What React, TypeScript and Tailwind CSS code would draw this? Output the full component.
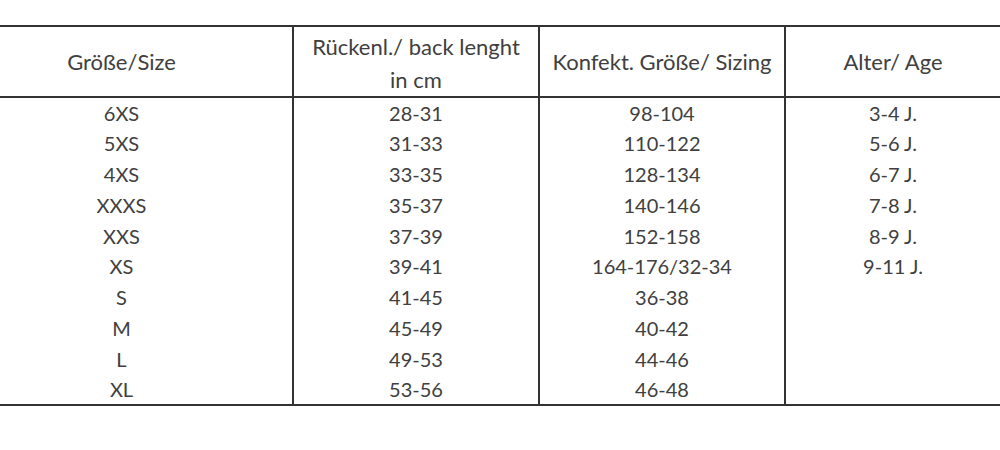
const rows: [string, string, string, string][] = [
  ['6XS', '28-31', '98-104', '3-4 J.'],
  ['5XS', '31-33', '110-122', '5-6 J.'],
  ['4XS', '33-35', '128-134', '6-7 J.'],
  ['XXXS', '35-37', '140-146', '7-8 J.'],
  ['XXS', '37-39', '152-158', '8-9 J.'],
  ['XS', '39-41', '164-176/32-34', '9-11 J.'],
  ['S', '41-45', '36-38', ''],
  ['M', '45-49', '40-42', ''],
  ['L', '49-53', '44-46', ''],
  ['XL', '53-56', '46-48', ''],
];

export default function App() {
  return (
    <div className="w-[1000px] h-[450px] bg-white pt-[25px] overflow-hidden text-[#404040] font-['Lato','Liberation_Sans',sans-serif]">
      <table className="table-fixed border-collapse w-[1000px]">
        <colgroup>
          <col className="w-[293px]" />
          <col className="w-[246px]" />
          <col className="w-[246px]" />
          <col className="w-[215px]" />
        </colgroup>
        <thead>
          <tr className="h-[70px] border-t-2 border-b-2 border-[#333] text-[22px] leading-[33px]">
            <th className="font-normal text-center pr-[49px]">Größe/Size</th>
            <th className="font-normal text-center border-l-2 border-[#333] pt-[3px]">
              Rückenl./ back lenght
              <br />
              in cm
            </th>
            <th className="font-normal text-center border-l-2 border-[#333]">Konfekt. Größe/ Sizing</th>
            <th className="font-normal text-center border-l-2 border-[#333]">Alter/ Age</th>
          </tr>
        </thead>
        <tbody className="border-b-2 border-[#333] text-[20px]">
          {rows.map(([size, back, sizing, age]) => (
            <tr key={size} className="h-[30.8px]">
              <td className="text-center pr-[49px] leading-none">{size}</td>
              <td className="text-center border-l-2 border-[#333] leading-none">{back}</td>
              <td className="text-center border-l-2 border-[#333] leading-none">{sizing}</td>
              <td className="text-center border-l-2 border-[#333] leading-none">{age}</td>
            </tr>
          ))}
        </tbody>
      </table>
    </div>
  );
}
